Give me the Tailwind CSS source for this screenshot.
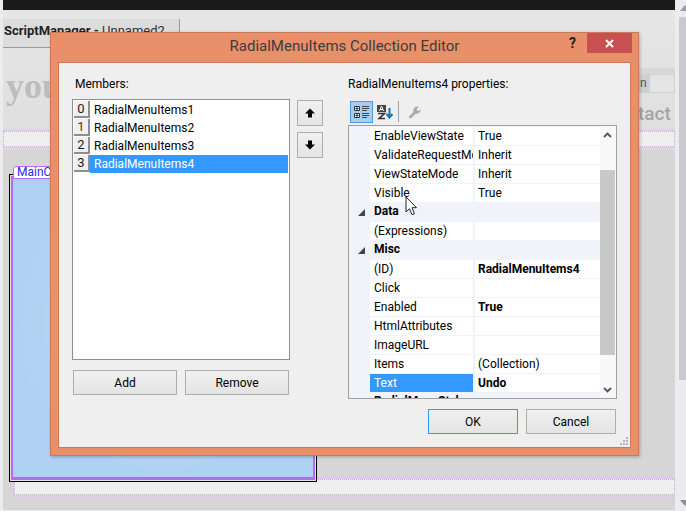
<!DOCTYPE html>
<html lang="en">
<head>
    <meta charset="UTF-8">
    <title>RadialMenuItems Collection Editor</title>
    <script src="https://cdn.jsdelivr.net/npm/@tailwindcss/browser@4"></script>
</head>
<body class="w-[686px] h-[511px] overflow-hidden bg-[#d6d6d6] font-['Roboto','Open_Sans',sans-serif] text-[12px] text-black">
<div class="relative w-[686px] h-[511px] overflow-hidden">

    <!-- designer surface behind the dialog -->
    <div class="absolute left-[3px] top-0 w-[672px] h-[10px] bg-[#1a1a1a]"></div>
    <div class="absolute left-0 top-0 w-[3px] h-[511px] bg-[#ececf0]"></div>
    <div class="absolute left-0 bottom-0 w-[686px] h-px bg-[#ececec]"></div>
    <div class="absolute left-[3px] top-[10px] w-[672px] h-[140px] bg-gradient-to-b from-[#e6e6e6] to-[#dedede]"></div>
    <div class="absolute left-[3px] top-[19px] w-[177px] h-[29px] bg-[#dcdcdc] border-r border-b border-[#9a9a9a] pl-px pt-[2px] text-[13px] leading-[20px] whitespace-nowrap overflow-hidden"><b class="text-[#222]">ScriptManager - </b><span class="text-[#333]">Unnamed2</span></div>
    <div class="absolute left-[3px] top-[47px] w-[48px] h-px bg-[#9a9a9a]"></div>
    <div class="absolute left-[6px] top-[66px] font-['Liberation_Serif',serif] font-bold text-[36px] leading-[40px] text-[#bdbdbd]">you</div>
    <div class="absolute left-[630px] top-[68px] w-[45px] h-[7px] bg-[#d8d8d8]"></div>
    <div class="absolute left-[630px] top-[74px] w-[45px] h-[19px] bg-[#cdd0d3] border border-[#d2d2d2] flex justify-end">
        <div class="w-[24px] h-full bg-[#e4e4e4]"></div>
    </div>
    <div class="absolute left-[640px] top-[75px] text-[12px] leading-[17px] text-[#555]">n</div>
    <div class="absolute left-[638px] top-[100px] font-medium text-[19px] leading-[28px] text-[#a4a4a4]">tact</div>

    <div class="absolute left-[3px] top-[129px] w-[672px] h-[21px] bg-[#efefef] border-t-2 border-b-[3px] border-[#e4cdf6]">
        <div class="h-full border border-dotted border-[#b5b5b5]"></div>
    </div>

    <div class="absolute left-[12px] top-[477px] w-[663px] h-[20px] bg-[#efefef] border-y-2 border-l-2 border-[#e0c6f4]">
        <div class="h-full border border-dotted border-[#b5b5b5]"></div>
    </div>

    <div class="absolute left-[9px] top-[174px] w-[308px] h-[308px] border border-black bg-[#e2e2e2] p-px">
        <div class="relative w-full h-full overflow-hidden bg-[#afd1f3] border-x-2 border-t-2 border-b-[3px] border-[#b56cf5]">
            <div class="absolute left-[5px] top-0 w-[290px] h-[290px] rounded-full bg-white/[0.03]"></div>
            <div class="absolute left-[31px] top-[27px] w-[238px] h-[238px] rounded-full bg-white/[0.06]"></div>
        </div>
    </div>
    <div class="absolute left-[13px] top-[166px] w-[80px] h-[13px] bg-white border border-[#b56cf5] rounded-tl-[3px] pl-[3px] text-[12px] leading-[11px] text-[#2a2af0] overflow-hidden">MainContent</div>

    <!-- right scrollbar -->
    <div class="absolute right-0 top-0 w-[11px] h-[511px] bg-[#ececf0] pl-[4px]">
        <div class="mt-[5px] ml-[1px] w-0 h-0 border-x-[5px] border-b-[6px] border-x-transparent border-b-[#9a9aa5]"></div>
        <div class="mt-[6px] w-[7px] h-[363px] bg-[#c8cad0]"></div>
        <div class="mt-[120px] ml-[1px] w-0 h-0 border-x-[5px] border-t-[6px] border-x-transparent border-t-[#8f8f98]"></div>
    </div>

    <!-- dialog -->
    <div class="absolute left-[50px] top-[32px] w-[589px] h-[424px] bg-[#e9906a] border border-[#c97a58] shadow-[1px_1px_3px_rgba(0,0,0,0.25)] flex flex-col px-[7px] pb-[7px]">
        <div class="relative h-[29px] shrink-0 flex items-center justify-center text-[15px] text-[#3d3d3d]">
            <span class="pb-[2px]">RadialMenuItems Collection Editor</span>
            <span class="absolute left-[511px] top-0 font-bold text-[14px] leading-[20px] text-[#222]">?</span>
            <div class="absolute right-[-1px] top-0 w-[45px] h-[20px] bg-[#c75050] flex items-center justify-center">
                <svg width="9" height="9" viewBox="0 0 9 9"><path d="M1 1l7 7M8 1l-7 7" stroke="#fff" stroke-width="2"/></svg>
            </div>
        </div>

        <div class="flex-1 bg-[#efefef] border border-[#c97a58] relative pl-[13px] pr-[13px] pt-[13px]">
            <div class="flex h-[323px]">
                <!-- members column -->
                <div class="w-[218px] shrink-0 flex flex-col">
                    <div class="pl-[3px] h-[23px] leading-[17px] text-[12px]">Members:</div>
                    <div class="h-[261px] bg-white border border-[#8e8f94] pt-px pl-px">
                        <div class="flex h-[18px]">
                            <div class="w-[16px] h-[17px] bg-[#f0f0f0] border-b-2 border-r-2 border-[#8f8f8f] text-center text-[13px] leading-[15px] text-[#222]">0</div>
                            <div class="flex-1 pl-[4px] leading-[18px]">RadialMenuItems1</div>
                        </div>
                        <div class="flex h-[18px]">
                            <div class="w-[16px] h-[17px] bg-[#f0f0f0] border-b-2 border-r-2 border-[#8f8f8f] text-center text-[13px] leading-[15px] text-[#5a3a10]">1</div>
                            <div class="flex-1 pl-[4px] leading-[18px]">RadialMenuItems2</div>
                        </div>
                        <div class="flex h-[18px]">
                            <div class="w-[16px] h-[17px] bg-[#f0f0f0] border-b-2 border-r-2 border-[#8f8f8f] text-center text-[13px] leading-[15px] text-[#222]">2</div>
                            <div class="flex-1 pl-[4px] leading-[18px]">RadialMenuItems3</div>
                        </div>
                        <div class="flex h-[18px]">
                            <div class="w-[16px] h-[17px] bg-[#f0f0f0] border-b-2 border-r-2 border-[#8f8f8f] text-center text-[13px] leading-[15px] text-[#222]">3</div>
                            <div class="flex-1 mr-px pl-[4px] leading-[18px] bg-[#3399ff] text-white">RadialMenuItems4</div>
                        </div>
                    </div>
                    <div class="flex gap-[8px] mt-[10px] pl-px">
                        <div class="w-[104px] h-[25px] bg-gradient-to-b from-[#f0f0f0] to-[#e4e4e4] border border-[#adadad] text-center leading-[24px]">Add</div>
                        <div class="w-[104px] h-[25px] bg-gradient-to-b from-[#f0f0f0] to-[#e4e4e4] border border-[#adadad] text-center leading-[24px]">Remove</div>
                    </div>
                </div>

                <!-- move up / down -->
                <div class="w-[58px] shrink-0 pt-[24px] pl-[7px] flex flex-col gap-[6px]">
                    <div class="w-[26px] h-[26px] bg-gradient-to-b from-[#f0f0f0] to-[#e4e4e4] border border-[#adadad] flex items-center justify-center">
                        <svg width="10" height="10" viewBox="0 0 10 10"><path d="M5 0.5L10 5.5H7V9.5H3V5.5H0Z" fill="#000"/></svg>
                    </div>
                    <div class="w-[26px] h-[26px] bg-gradient-to-b from-[#f0f0f0] to-[#e4e4e4] border border-[#adadad] flex items-center justify-center">
                        <svg width="10" height="10" viewBox="0 0 10 10"><path d="M5 9.5L10 4.5H7V0.5H3V4.5H0Z" fill="#000"/></svg>
                    </div>
                </div>

                <!-- properties column -->
                <div class="w-[269px] shrink-0 flex flex-col">
                    <div class="h-[17px] leading-[17px] whitespace-nowrap">RadialMenuItems4 properties:</div>
                    <div class="h-[24px] flex items-start pl-[2px] mt-[8px]">
                        <div class="w-[23px] h-[22px] bg-[#a6cdf0] border border-[#4f9ae0] flex items-center justify-center">
                            <svg width="15" height="14" viewBox="0 0 15 14"><path d="M0.5 1.5h5v4h-5zM0.5 8.5h5v4h-5z" fill="#fff" stroke="#333"/><path d="M1.5 3.5h3M3 2v3M1.5 10.500h3M3 9v3" stroke="#333"/><path d="M8 1.500h7M8 3.500h7M8 5.500h5M8 8.500h7M8 10.500h7M8 12.500h5" stroke="#444"/></svg>
                        </div>
                        <div class="w-[23px] h-[22px] flex items-center justify-center">
                            <svg width="16" height="15" viewBox="0 0 16 15"><rect x="0" y="0" width="9" height="7" fill="#444"/><path d="M2.500 6L4.500 1L6.500 6M3.200 4.500h2.600" stroke="#fff" stroke-width="1" fill="none"/><path d="M1 8.500h6.500L2 13.500h6" stroke="#333" stroke-width="1.600" fill="none"/><path d="M12.500 3v9M9.500 9l3 3.500 3-3.500" stroke="#1b6fb5" stroke-width="2" fill="none"/></svg>
                        </div>
                        <div class="w-px h-[21px] bg-[#a0a0a0] ml-[2px]"></div>
                        <div class="w-[30px] h-[22px] flex items-center justify-center">
                            <svg width="13" height="13" viewBox="0 0 13 13"><path d="M0.500 11l5-5C4.500 3.500 6.500 0.500 9.500 0.500L11 .7 8.500 3.200 9.500 4.500l1.300.7L12.700 3c.4 3-2.200 5.400-5 4.700l-5 4.800z" fill="#a9a9a9"/></svg>
                        </div>
                    </div>
                    <!-- property grid -->
                    <div class="relative h-[274px] shrink-0 bg-white border border-[#a0a0a0] overflow-hidden flex">
                        <div class="w-[251px] shrink-0 bg-[#f0f4fa] pt-px">
                            <div class="flex h-[19px] border-b border-[#f0f4fa]"><div class="w-[21px]"></div><div class="w-[105px] h-[18px] bg-white border-r-2 border-[#f0f4fa] pl-[4px] leading-[18px] overflow-hidden whitespace-nowrap">EnableViewState</div><div class="flex-1 h-[18px] bg-white pl-[3px] leading-[18px]">True</div></div>
                            <div class="flex h-[19px] border-b border-[#f0f4fa]"><div class="w-[21px]"></div><div class="w-[105px] h-[18px] bg-white border-r-2 border-[#f0f4fa] pl-[4px] leading-[18px] overflow-hidden whitespace-nowrap">ValidateRequestMode</div><div class="flex-1 h-[18px] bg-white pl-[3px] leading-[18px]">Inherit</div></div>
                            <div class="flex h-[19px] border-b border-[#f0f4fa]"><div class="w-[21px]"></div><div class="w-[105px] h-[18px] bg-white border-r-2 border-[#f0f4fa] pl-[4px] leading-[18px] overflow-hidden whitespace-nowrap">ViewStateMode</div><div class="flex-1 h-[18px] bg-white pl-[3px] leading-[18px]">Inherit</div></div>
                            <div class="flex h-[19px] border-b border-[#f0f4fa]"><div class="w-[21px]"></div><div class="w-[105px] h-[18px] bg-white border-r-2 border-[#f0f4fa] pl-[4px] leading-[18px] overflow-hidden whitespace-nowrap">Visible</div><div class="flex-1 h-[18px] bg-white pl-[3px] leading-[18px]">True</div></div>
                            <div class="flex h-[19px]"><div class="w-[21px] pl-[9px] pt-[6px]"><svg width="7" height="7" viewBox="0 0 7 7"><path d="M7 0V7H0Z" fill="#444"/></svg></div><b class="pl-[4px] leading-[17px]">Data</b></div>
                            <div class="flex h-[19px] border-b border-[#f0f4fa]"><div class="w-[21px]"></div><div class="w-[105px] h-[18px] bg-white border-r-2 border-[#f0f4fa] pl-[4px] leading-[18px] whitespace-nowrap">(Expressions)</div><div class="flex-1 h-[18px] bg-white"></div></div>
                            <div class="flex h-[19px]"><div class="w-[21px] pl-[9px] pt-[6px]"><svg width="7" height="7" viewBox="0 0 7 7"><path d="M7 0V7H0Z" fill="#444"/></svg></div><b class="pl-[4px] leading-[17px]">Misc</b></div>
                            <div class="flex h-[19px] border-b border-[#f0f4fa]"><div class="w-[21px]"></div><div class="w-[105px] h-[18px] bg-white border-r-2 border-[#f0f4fa] pl-[4px] leading-[18px]">(ID)</div><b class="flex-1 h-[18px] bg-white pl-[3px] leading-[18px]">RadialMenuItems4</b></div>
                            <div class="flex h-[19px] border-b border-[#f0f4fa]"><div class="w-[21px]"></div><div class="w-[105px] h-[18px] bg-white border-r-2 border-[#f0f4fa] pl-[4px] leading-[18px]">Click</div><div class="flex-1 h-[18px] bg-white"></div></div>
                            <div class="flex h-[19px] border-b border-[#f0f4fa]"><div class="w-[21px]"></div><div class="w-[105px] h-[18px] bg-white border-r-2 border-[#f0f4fa] pl-[4px] leading-[18px]">Enabled</div><b class="flex-1 h-[18px] bg-white pl-[3px] leading-[18px]">True</b></div>
                            <div class="flex h-[19px] border-b border-[#f0f4fa]"><div class="w-[21px]"></div><div class="w-[105px] h-[18px] bg-white border-r-2 border-[#f0f4fa] pl-[4px] leading-[18px]">HtmlAttributes</div><div class="flex-1 h-[18px] bg-white"></div></div>
                            <div class="flex h-[19px] border-b border-[#f0f4fa]"><div class="w-[21px]"></div><div class="w-[105px] h-[18px] bg-white border-r-2 border-[#f0f4fa] pl-[4px] leading-[18px]">ImageURL</div><div class="flex-1 h-[18px] bg-white"></div></div>
                            <div class="flex h-[19px] border-b border-[#f0f4fa]"><div class="w-[21px]"></div><div class="w-[105px] h-[18px] bg-white border-r-2 border-[#f0f4fa] pl-[4px] leading-[18px]">Items</div><div class="flex-1 h-[18px] bg-white pl-[3px] leading-[18px]">(Collection)</div></div>
                            <div class="flex h-[19px] border-b border-[#f0f4fa]"><div class="w-[21px]"></div><div class="w-[105px] h-[18px] bg-[#3399ff] border-r-2 border-[#f0f4fa] pl-[4px] leading-[18px] text-white">Text</div><b class="flex-1 h-[18px] bg-white pl-[3px] leading-[18px]">Undo</b></div>
                            <div class="flex h-[19px]"><div class="w-[21px]"></div><b class="pl-[4px] leading-[17px] whitespace-nowrap">RadialMenuStyle</b></div>
                        </div>
                        <!-- grid scrollbar -->
                        <div class="flex-1 bg-[#f8f8f8] pr-px flex flex-col items-center">
                            <svg class="mt-[6px] shrink-0" width="9" height="6" viewBox="0 0 9 6"><path d="M1 5l3.500-3.500L8 5" stroke="#555" stroke-width="1.800" fill="none"/></svg>
                            <div class="mt-[32px] w-full h-[185px] shrink-0 bg-[#c8c8c8]"></div>
                            <svg class="mt-[32px] shrink-0" width="9" height="6" viewBox="0 0 9 6"><path d="M1 1l3.500 3.500L8 1" stroke="#555" stroke-width="1.800" fill="none"/></svg>
                        </div>
                    </div>
                </div>
            </div>

            <div class="flex justify-end gap-[8px] mt-[10px] mr-px">
                <div class="w-[90px] h-[25px] bg-gradient-to-b from-[#f0f0f0] to-[#e4e4e4] border border-[#3399ff] text-center leading-[24px]">OK</div>
                <div class="w-[90px] h-[25px] bg-gradient-to-b from-[#f0f0f0] to-[#e4e4e4] border border-[#adadad] text-center leading-[24px]">Cancel</div>
            </div>
            <svg class="absolute right-[1px] bottom-[1px]" width="9" height="9" viewBox="0 0 9 9"><path d="M6 0h2v2H6zM3 3h2v2H3zM6 3h2v2H6zM0 6h2v2H0zM3 6h2v2H3zM6 6h2v2H6z" fill="#b5b5b5"/></svg>
        </div>
    </div>

    <!-- mouse pointer over the grid -->
    <svg class="absolute left-[405px] top-[196px]" width="13" height="21" viewBox="0 0 13 21"><path d="M1 1v15l3.500-3.300 2.500 6 2.500-1-2.500-6h4.500Z" fill="#fff" stroke="#222" stroke-width="1"/></svg>
</div>
</body>
</html>
